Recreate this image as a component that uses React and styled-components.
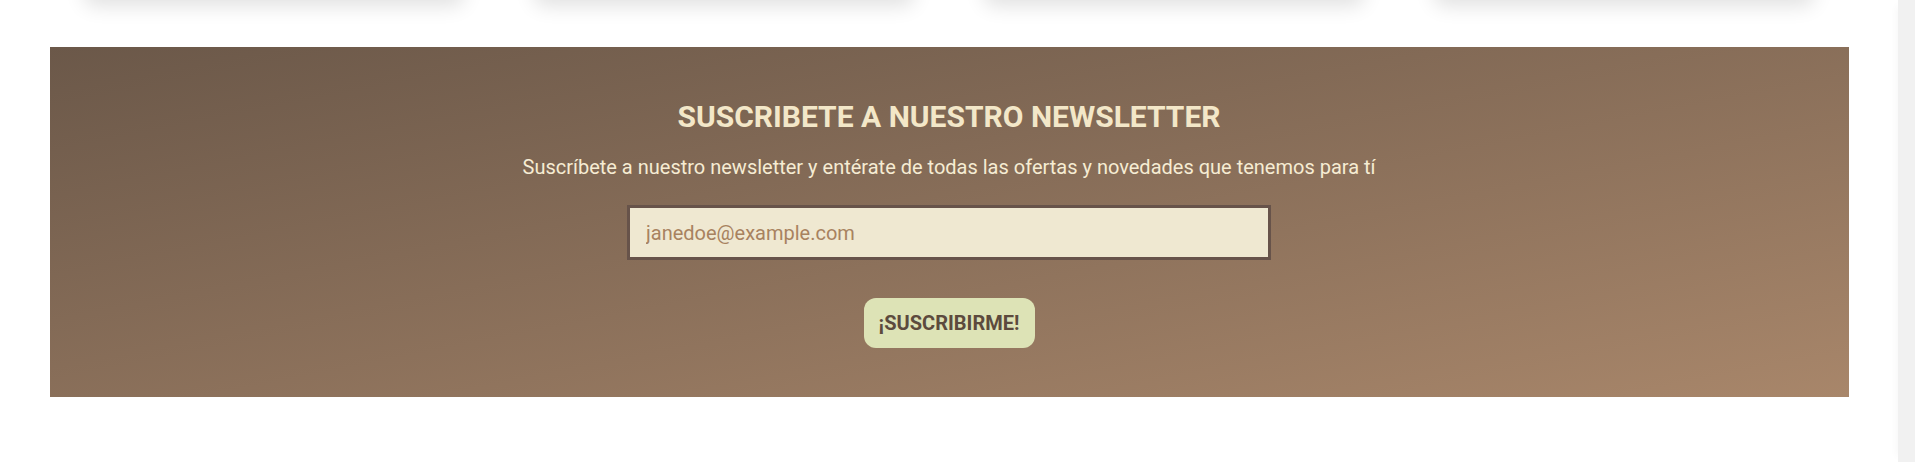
import React from "react";
import styled, { createGlobalStyle } from "styled-components";

const GlobalStyle = createGlobalStyle`
  html, body {
    margin: 0;
    padding: 0;
    background: #ffffff;
    font-family: Roboto, "Liberation Sans", Arial, sans-serif;
    overflow: hidden;
  }
  * {
    box-sizing: border-box;
  }
`;

function App() {
  const cards = [1, 2, 3, 4];
  return (
    <Viewport>
      <GlobalStyle />
      <Page>
        <CardRow>
          {cards.map((c) => (
            <Card key={c} />
          ))}
        </CardRow>
        <Newsletter>
          <Title>SUSCRIBETE A NUESTRO NEWSLETTER</Title>
          <Subtitle>
            Suscríbete a nuestro newsletter y entérate de todas las ofertas y
            novedades que tenemos para tí
          </Subtitle>
          <EmailInput type="email" placeholder="janedoe@example.com" />
          <SubmitButton type="button">¡SUSCRIBIRME!</SubmitButton>
        </Newsletter>
      </Page>
      <Scrollbar />
    </Viewport>
  );
}

export default App;

const Viewport = styled.div`
  display: flex;
  width: 100%;
  height: 462px;
  overflow: hidden;
`;

const Page = styled.div`
  flex: 1;
  display: flex;
  flex-direction: column;
  align-items: center;
`;

const CardRow = styled.div`
  display: flex;
  gap: 70px;
  margin-top: -200px;
`;

const Card = styled.div`
  width: 380px;
  height: 200px;
  background: #ffffff;
  border-radius: 10px;
  box-shadow: 0 6px 20px rgba(0, 0, 0, 0.12);
`;

const Newsletter = styled.section`
  width: 1799px;
  margin-top: 47px;
  height: 350px;
  padding-top: 52px;
  display: flex;
  flex-direction: column;
  align-items: center;
  background: linear-gradient(to bottom right, #6b5849, #a8866a);
`;

const Title = styled.h2`
  margin: 0;
  font-size: 30px;
  line-height: 36px;
  font-weight: 700;
  color: #f3e7c8;
`;

const Subtitle = styled.p`
  margin: 18px 0 0;
  font-size: 20px;
  line-height: 28px;
  color: #f6ecd3;
`;

const EmailInput = styled.input`
  margin-top: 24px;
  width: 644px;
  height: 55px;
  padding: 0 16px;
  border: 3px solid #67534a;
  background: #efe8d1;
  font-family: inherit;
  font-size: 20px;
  color: #6b5849;
  outline: none;
  &::placeholder {
    color: #a8825f;
  }
`;

const SubmitButton = styled.button`
  margin-top: 38px;
  width: 171px;
  height: 50px;
  border: none;
  border-radius: 12px;
  background: #dde3b6;
  color: #5c4a3d;
  font-family: inherit;
  font-size: 20px;
  font-weight: 700;
  cursor: pointer;
`;

const Scrollbar = styled.div`
  width: 17px;
  flex-shrink: 0;
  background: #f1f1f1;
  box-shadow: -6px 0 8px -6px rgba(0, 0, 0, 0.06);
`;
